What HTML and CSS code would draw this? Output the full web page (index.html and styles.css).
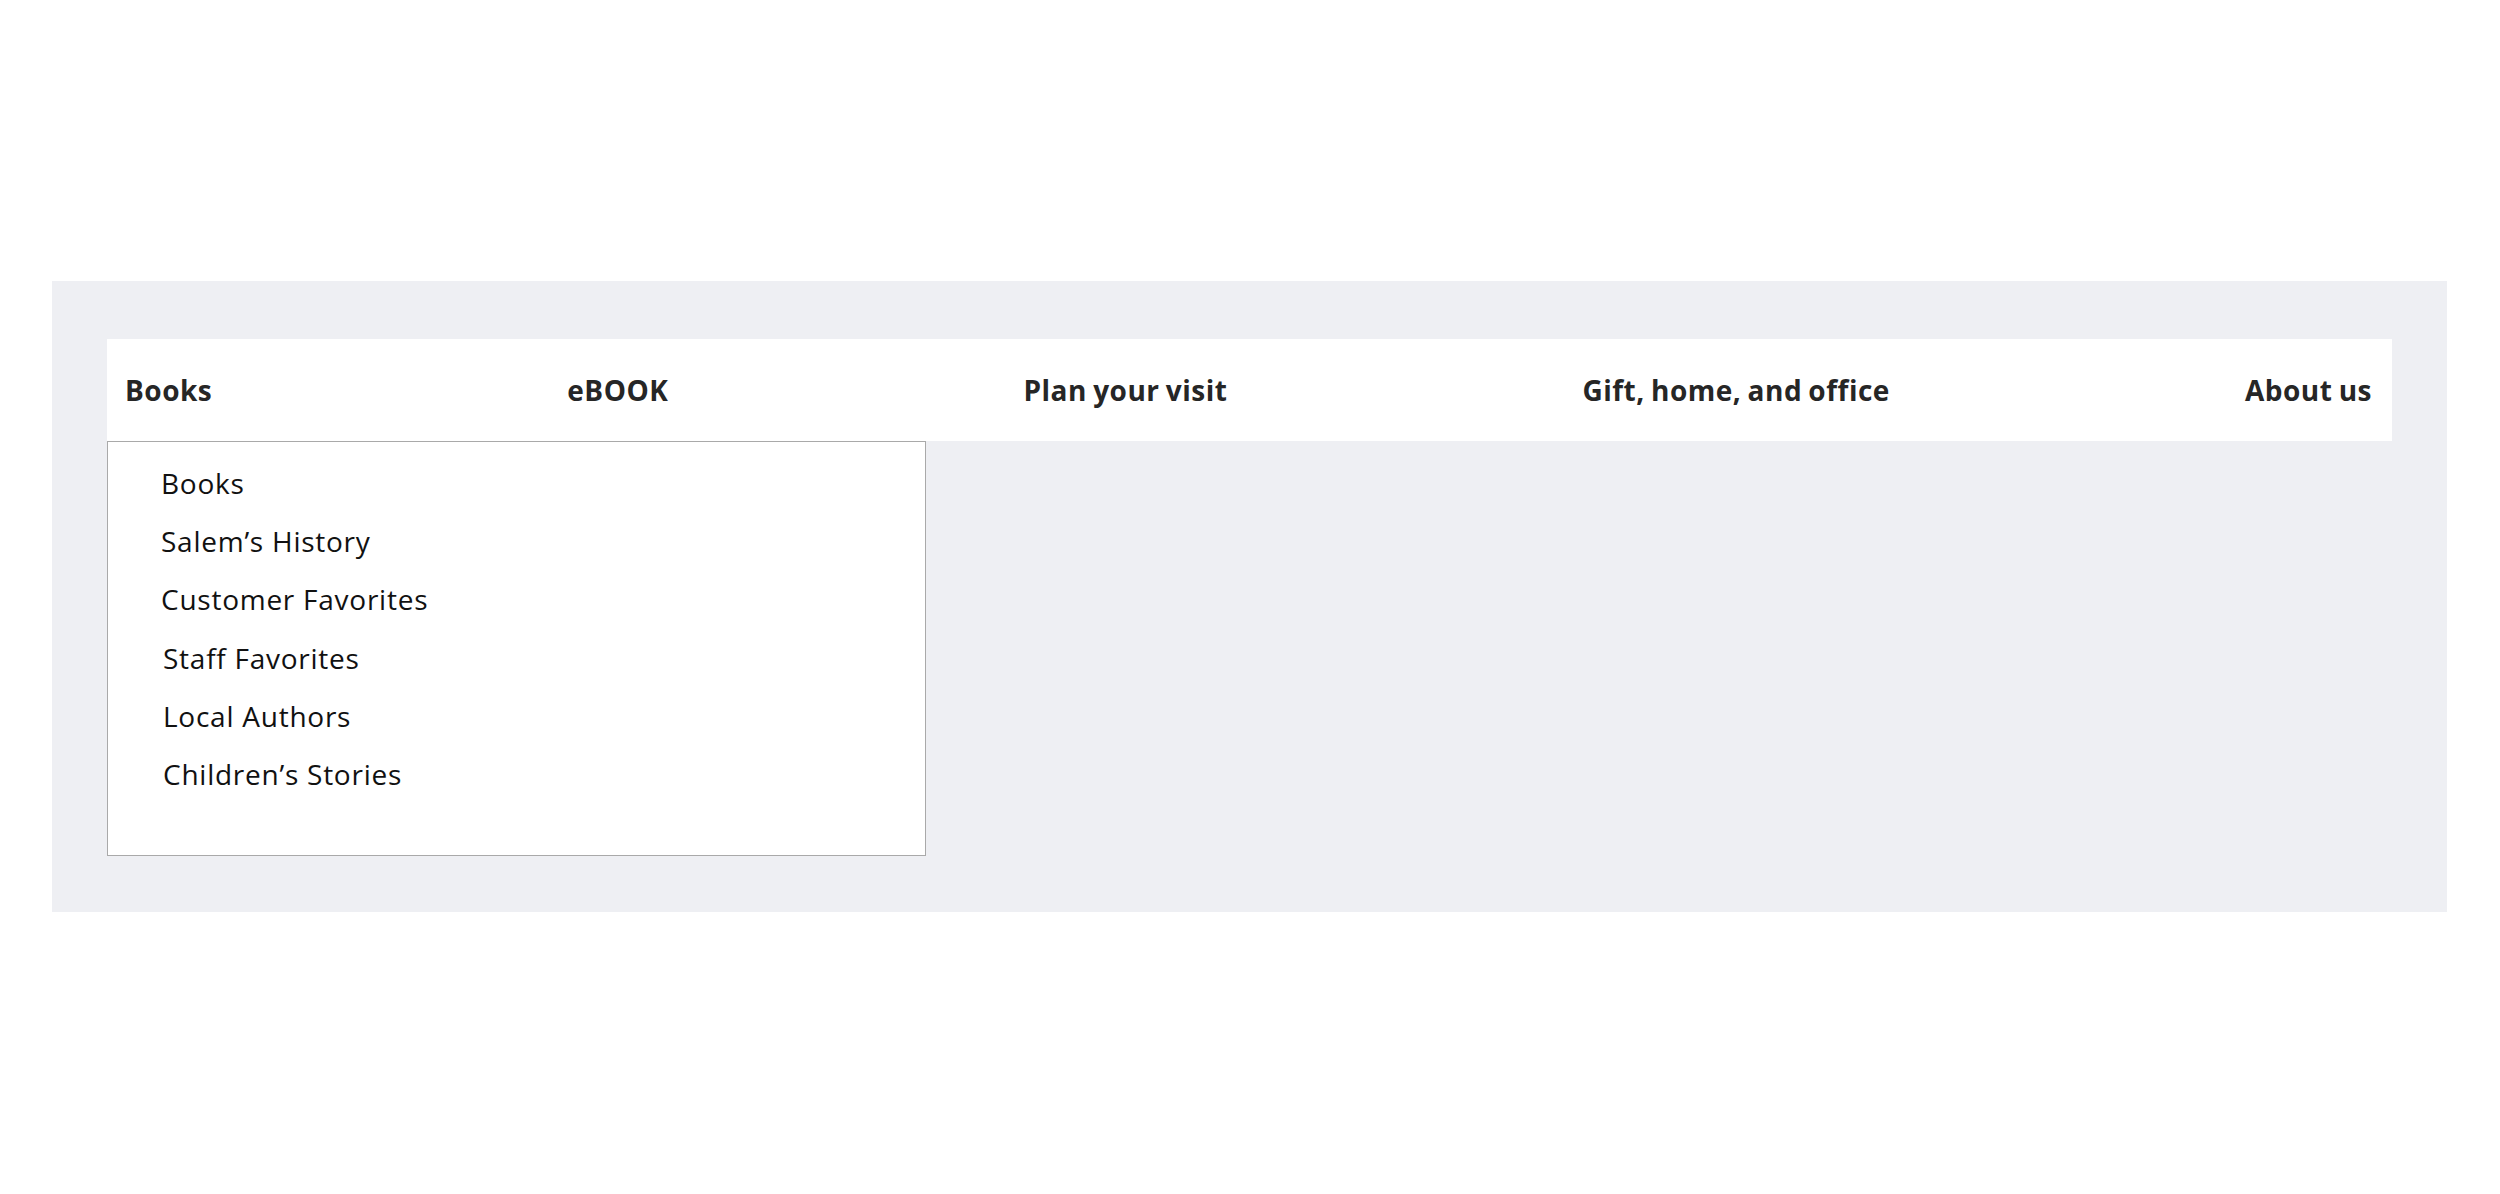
FILE: index.html
```html
<!DOCTYPE html>
<html lang="en">
<head>
<meta charset="utf-8">
<title>Menu</title>
<link rel="stylesheet" href="styles.css">
</head>
<body>
  <div class="panel">
    <nav class="navbar">
      <a class="nav-link" href="#">Books</a>
      <a class="nav-link" href="#">eBOOK</a>
      <a class="nav-link" href="#">Plan your visit</a>
      <a class="nav-link" href="#">Gift, home, and office</a>
      <a class="nav-link" href="#">About us</a>
    </nav>
    <ul class="dropdown">
      <li class="dropdown-item">Books</li>
      <li class="dropdown-item">Salem’s History</li>
      <li class="dropdown-item">Customer Favorites</li>
      <li class="dropdown-item shifted">Staff Favorites</li>
      <li class="dropdown-item shifted">Local Authors</li>
      <li class="dropdown-item shifted">Children’s Stories</li>
    </ul>
  </div>
</body>
</html>
```

FILE: styles.css
```css
html, body {
  margin: 0;
  padding: 0;
  background: #ffffff;
}

body {
  font-family: "Open Sans", "Liberation Sans", sans-serif;
  padding-top: 281px;
}

.panel {
  width: 2395px;
  box-sizing: border-box;
  margin: 0 0 0 52px;
  padding: 58px 55px 56px 55px;
  background: #eeeff3;
}

.navbar {
  display: flex;
  justify-content: space-between;
  align-items: center;
  height: 102px;
  padding: 0 20px 0 18px;
  background: #ffffff;
}

.nav-link {
  font-size: 28px;
  font-weight: 700;
  color: #262626;
  text-decoration: none;
  letter-spacing: 0.5px;
  word-spacing: -1.5px;
}

.dropdown {
  list-style: none;
  margin: 0;
  width: 819px;
  height: 415px;
  box-sizing: border-box;
  padding: 12px 0 0 53px;
  background: #ffffff;
  border: 1px solid #a9a9a9;
}

.dropdown-item {
  font-size: 28px;
  line-height: 58.2px;
  color: #111111;
  letter-spacing: 0.75px;
}

.dropdown-item.shifted {
  padding-left: 2px;
}
```
